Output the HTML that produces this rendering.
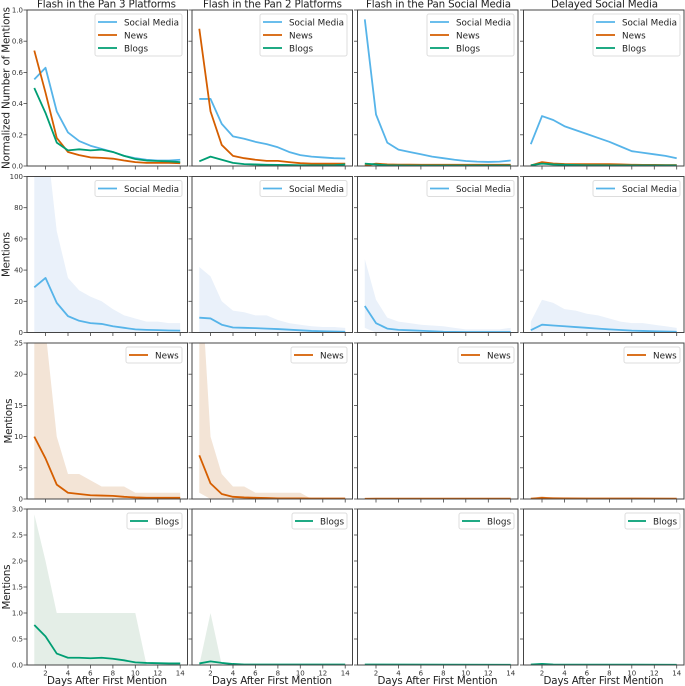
<!DOCTYPE html>
<html><head><meta charset="utf-8"><style>
html,body{margin:0;padding:0;background:#fff;}
svg{display:block;font-family:"DejaVu Sans","Liberation Sans",sans-serif;}
.sm{fill:none;stroke:#56B4E9;stroke-width:1.8;vector-effect:non-scaling-stroke;stroke-linejoin:round}
.nw{fill:none;stroke:#D55E00;stroke-width:1.8;vector-effect:non-scaling-stroke;stroke-linejoin:round}
.bl{fill:none;stroke:#009E73;stroke-width:1.8;vector-effect:non-scaling-stroke;stroke-linejoin:round}
.fs{fill:#eaf1fa;stroke:none}
.fn{fill:#f3e4d6;stroke:none}
.fb{fill:#e4eee7;stroke:none}
.fr{fill:none;stroke:#444;stroke-width:1}
.lg{fill:#fff;fill-opacity:.85;stroke:#ddd;stroke-width:1}
.lt{font-size:8.8px;fill:#222}
.tk{font-size:7px;fill:#333}
.ti{font-size:10.3px;fill:#222}
.ax{font-size:10.3px;fill:#222}
.tm{stroke:#444;stroke-width:.8}
</style></head><body>
<svg width="685" height="686" viewBox="0 0 685 686">
<defs>
<g id="xt" class="tm"><line x1="18.5" y1="156" x2="18.5" y2="159.5"/><line x1="41" y1="156" x2="41" y2="159.5"/><line x1="63.4" y1="156" x2="63.4" y2="159.5"/><line x1="85.9" y1="156" x2="85.9" y2="159.5"/><line x1="108.3" y1="156" x2="108.3" y2="159.5"/><line x1="130.8" y1="156" x2="130.8" y2="159.5"/><line x1="153.2" y1="156" x2="153.2" y2="159.5"/>
<line x1="0" y1="0" x2="-3.5" y2="0"/><line x1="0" y1="31.2" x2="-3.5" y2="31.2"/><line x1="0" y1="62.4" x2="-3.5" y2="62.4"/><line x1="0" y1="93.6" x2="-3.5" y2="93.6"/><line x1="0" y1="124.8" x2="-3.5" y2="124.8"/><line x1="0" y1="156" x2="-3.5" y2="156"/></g>
<g id="xt4" class="tm"><line x1="18.5" y1="156" x2="18.5" y2="159.5"/><line x1="41" y1="156" x2="41" y2="159.5"/><line x1="63.4" y1="156" x2="63.4" y2="159.5"/><line x1="85.9" y1="156" x2="85.9" y2="159.5"/><line x1="108.3" y1="156" x2="108.3" y2="159.5"/><line x1="130.8" y1="156" x2="130.8" y2="159.5"/><line x1="153.2" y1="156" x2="153.2" y2="159.5"/>
<line x1="0" y1="0" x2="-3.5" y2="0"/><line x1="0" y1="26" x2="-3.5" y2="26"/><line x1="0" y1="52" x2="-3.5" y2="52"/><line x1="0" y1="78" x2="-3.5" y2="78"/><line x1="0" y1="104" x2="-3.5" y2="104"/><line x1="0" y1="130" x2="-3.5" y2="130"/><line x1="0" y1="156" x2="-3.5" y2="156"/></g>
</defs>

<text class="ti" x="106.5" y="7.5" text-anchor="middle" textLength="139">Flash in the Pan 3 Platforms</text>
<text class="ti" x="272.5" y="7.5" text-anchor="middle" textLength="139">Flash in the Pan 2 Platforms</text>
<text class="ti" x="438.5" y="7.5" text-anchor="middle" textLength="145">Flash in the Pan Social Media</text>
<text class="ti" x="604.5" y="7.5" text-anchor="middle" textLength="107">Delayed Social Media</text>

<text class="ax" transform="translate(9.5,88) rotate(-90)" text-anchor="middle" textLength="162">Normalized Number of Mentions</text>
<text class="ax" transform="translate(9.5,254.5) rotate(-90)" text-anchor="middle" textLength="45">Mentions</text>
<text class="ax" transform="translate(12,421) rotate(-90)" text-anchor="middle" textLength="45">Mentions</text>
<text class="ax" transform="translate(10,587) rotate(-90)" text-anchor="middle" textLength="45">Mentions</text>

<g class="tk" text-anchor="end">
<text x="23" y="12.5">1.0</text><text x="23" y="43.7">0.8</text><text x="23" y="74.9">0.6</text><text x="23" y="106.1">0.4</text><text x="23" y="137.3">0.2</text><text x="23" y="168.5">0.0</text>
<text x="23" y="179">100</text><text x="23" y="210.2">80</text><text x="23" y="241.4">60</text><text x="23" y="272.6">40</text><text x="23" y="303.8">20</text><text x="23" y="335">0</text>
<text x="23" y="345.5">25</text><text x="23" y="376.7">20</text><text x="23" y="407.9">15</text><text x="23" y="439.1">10</text><text x="23" y="470.3">5</text><text x="23" y="501.5">0</text>
<text x="23" y="511.5">3.0</text><text x="23" y="537.5">2.5</text><text x="23" y="563.5">2.0</text><text x="23" y="589.5">1.5</text><text x="23" y="615.5">1.0</text><text x="23" y="641.5">0.5</text><text x="23" y="667.5">0.0</text>
</g>

<g class="tk" text-anchor="middle">
<text x="45.5" y="675.5">2</text><text x="68" y="675.5">4</text><text x="90.4" y="675.5">6</text><text x="112.9" y="675.5">8</text><text x="135.3" y="675.5">10</text><text x="157.8" y="675.5">12</text><text x="180.2" y="675.5">14</text>
<text x="210.5" y="675.5">2</text><text x="233" y="675.5">4</text><text x="255.4" y="675.5">6</text><text x="277.9" y="675.5">8</text><text x="300.3" y="675.5">10</text><text x="322.8" y="675.5">12</text><text x="345.2" y="675.5">14</text>
<text x="376" y="675.5">2</text><text x="398.5" y="675.5">4</text><text x="420.9" y="675.5">6</text><text x="443.4" y="675.5">8</text><text x="465.8" y="675.5">10</text><text x="488.3" y="675.5">12</text><text x="510.7" y="675.5">14</text>
<text x="542" y="675.5">2</text><text x="564.5" y="675.5">4</text><text x="586.9" y="675.5">6</text><text x="609.4" y="675.5">8</text><text x="631.8" y="675.5">10</text><text x="654.3" y="675.5">12</text><text x="676.7" y="675.5">14</text>
</g>
<g class="ax" text-anchor="middle">
<text x="107" y="684" textLength="120">Days After First Mention</text><text x="272" y="684" textLength="120">Days After First Mention</text><text x="437.5" y="684" textLength="120">Days After First Mention</text><text x="603.5" y="684" textLength="120">Days After First Mention</text>
</g>

<use href="#xt" x="27" y="10"/><use href="#xt" x="192" y="10"/><use href="#xt" x="357.5" y="10"/><use href="#xt" x="523.5" y="10"/>
<use href="#xt" x="27" y="176.5"/><use href="#xt" x="192" y="176.5"/><use href="#xt" x="357.5" y="176.5"/><use href="#xt" x="523.5" y="176.5"/>
<use href="#xt" x="27" y="343"/><use href="#xt" x="192" y="343"/><use href="#xt" x="357.5" y="343"/><use href="#xt" x="523.5" y="343"/>
<use href="#xt4" x="27" y="509"/><use href="#xt4" x="192" y="509"/><use href="#xt4" x="357.5" y="509"/><use href="#xt4" x="523.5" y="509"/>

<svg x="27" y="10" width="160.5" height="156" viewBox="0.35 -1 14.3 1" preserveAspectRatio="none">
<polyline class="sm" points="1,-.555 2,-.63 3,-.35 4,-.215 5,-.16 6,-.13 7,-.11 8,-.09 9,-.065 10,-.05 11,-.04 12,-.035 13,-.035 14,-.04"/>
<polyline class="nw" points="1,-.74 2,-.47 3,-.18 4,-.09 5,-.07 6,-.055 7,-.052 8,-.047 9,-.035 10,-.025 11,-.02 12,-.02 13,-.02 14,-.018"/>
<polyline class="bl" points="1,-.50 2,-.34 3,-.15 4,-.10 5,-.107 6,-.10 7,-.105 8,-.09 9,-.065 10,-.045 11,-.035 12,-.032 13,-.03 14,-.025"/>
</svg>
<svg x="192" y="10" width="160.5" height="156" viewBox="0.35 -1 14.3 1" preserveAspectRatio="none">
<polyline class="sm" points="1,-.43 2,-.43 3,-.27 4,-.19 5,-.175 6,-.155 7,-.14 8,-.12 9,-.09 10,-.07 11,-.06 12,-.055 13,-.05 14,-.048"/>
<polyline class="nw" points="1,-.88 2,-.35 3,-.135 4,-.065 5,-.05 6,-.04 7,-.033 8,-.033 9,-.025 10,-.018 11,-.015 12,-.015 13,-.015 14,-.015"/>
<polyline class="bl" points="1,-.03 2,-.06 3,-.04 4,-.02 5,-.012 6,-.01 7,-.008 8,-.007 9,-.006 10,-.005 11,-.005 12,-.005 13,-.005 14,-.01"/>
</svg>
<svg x="357.5" y="10" width="160.5" height="156" viewBox="0.35 -1 14.3 1" preserveAspectRatio="none">
<polyline class="sm" points="1,-.94 2,-.33 3,-.15 4,-.105 5,-.09 6,-.075 7,-.06 8,-.05 9,-.04 10,-.032 11,-.028 12,-.026 13,-.028 14,-.035"/>
<polyline class="nw" points="1,-.002 2,-.015 3,-.01 4,-.009 5,-.009 6,-.008 7,-.008 8,-.008 9,-.008 10,-.008 11,-.008 12,-.008 13,-.008 14,-.008"/>
<polyline class="bl" points="1,-.015 2,-.01 3,-.005 4,-.004 5,-.003 6,-.003 7,-.003 8,-.003 9,-.003 10,-.003 11,-.003 12,-.003 13,-.003 14,-.003"/>
</svg>
<svg x="523.5" y="10" width="160.5" height="156" viewBox="0.35 -1 14.3 1" preserveAspectRatio="none">
<polyline class="sm" points="1,-.14 2,-.32 3,-.295 4,-.255 5,-.23 6,-.205 7,-.18 8,-.155 9,-.125 10,-.095 11,-.085 12,-.075 13,-.065 14,-.05"/>
<polyline class="nw" points="1,-.003 2,-.025 3,-.016 4,-.013 5,-.012 6,-.012 7,-.012 8,-.012 9,-.01 10,-.008 11,-.007 12,-.007 13,-.006 14,-.006"/>
<polyline class="bl" points="1,-.005 2,-.015 3,-.01 4,-.008 5,-.006 6,-.005 7,-.005 8,-.004 9,-.004 10,-.004 11,-.004 12,-.004 13,-.004 14,-.004"/>
</svg>

<svg x="27" y="176.5" width="160.5" height="156" viewBox="0.35 -100 14.3 100" preserveAspectRatio="none">
<polygon class="fs" points="1,-140 2,-130 3,-65 4,-35 5,-27 6,-23 7,-20 8,-15 9,-11 10,-9 11,-7 12,-7 13,-6 14,-6 14,0 1,0"/>
<polyline class="sm" points="1,-29 2,-35 3,-19 4,-10.5 5,-7.5 6,-6 7,-5.5 8,-4 9,-3 10,-2 11,-1.7 12,-1.5 13,-1.3 14,-1.2"/>
</svg>
<svg x="192" y="176.5" width="160.5" height="156" viewBox="0.35 -100 14.3 100" preserveAspectRatio="none">
<polygon class="fs" points="1,-42 2,-36 3,-20 4,-14 5,-13 6,-11 7,-11 8,-8 9,-6 10,-5 11,-4 12,-3.5 13,-3.5 14,-3 14,0 1,0"/>
<polyline class="sm" points="1,-9.5 2,-9 3,-5 4,-3.2 5,-3 6,-2.8 7,-2.5 8,-2.2 9,-1.8 10,-1.4 11,-1 12,-.8 13,-.6 14,-.5"/>
</svg>
<svg x="357.5" y="176.5" width="160.5" height="156" viewBox="0.35 -100 14.3 100" preserveAspectRatio="none">
<polygon class="fs" points="1,-47 2,-21 3,-9.5 4,-7 5,-6 6,-5 7,-4.5 8,-4 9,-3 10,-2 11,-2 12,-2 13,-2 14,-3 14,0 2,0 1,-3"/>
<polyline class="sm" points="1,-17 2,-6 3,-2.5 4,-1.7 5,-1.4 6,-1.1 7,-.8 8,-.5 9,-.4 10,-.3 11,-.3 12,-.3 13,-.3 14,-.3"/>
</svg>
<svg x="523.5" y="176.5" width="160.5" height="156" viewBox="0.35 -100 14.3 100" preserveAspectRatio="none">
<polygon class="fs" points="1,-7 2,-21 3,-19 4,-15 5,-14 6,-12 7,-11 8,-9 9,-7 10,-6 11,-6 12,-5 13,-4 14,-3 14,0 1,0"/>
<polyline class="sm" points="1,-1.5 2,-5 3,-4.5 4,-4 5,-3.5 6,-3 7,-2.5 8,-2 9,-1.6 10,-1.2 11,-1 12,-.8 13,-.6 14,-.5"/>
</svg>

<svg x="27" y="343" width="160.5" height="156" viewBox="0.35 -25 14.3 25" preserveAspectRatio="none">
<polygon class="fn" points="1,-45 2,-27 3,-10 4,-4 5,-4 6,-3 7,-2 8,-2 9,-2 10,-1 11,-1 12,-1 13,-1 14,-1 14,0 1,0"/>
<polyline class="nw" points="1,-10 2,-6.5 3,-2.3 4,-1 5,-.8 6,-.6 7,-.55 8,-.5 9,-.35 10,-.25 11,-.2 12,-.2 13,-.2 14,-.2"/>
</svg>
<svg x="192" y="343" width="160.5" height="156" viewBox="0.35 -25 14.3 25" preserveAspectRatio="none">
<polygon class="fn" points="1,-40 2,-10 3,-4 4,-2 5,-2 6,-1 7,-1 8,-1 9,-1 10,-1 11,0 14,0 2,0 1,-1"/>
<polyline class="nw" points="1,-7 2,-2.5 3,-.8 4,-.35 5,-.25 6,-.2 7,-.15 8,-.1 9,-.1 10,-.1 11,-.08 12,-.08 13,-.08 14,-.08"/>
</svg>
<svg x="357.5" y="343" width="160.5" height="156" viewBox="0.35 -25 14.3 25" preserveAspectRatio="none">
<polyline class="nw" points="1,-.03 2,-.05 14,-.05"/>
</svg>
<svg x="523.5" y="343" width="160.5" height="156" viewBox="0.35 -25 14.3 25" preserveAspectRatio="none">
<polygon class="fn" points="1,0 2,-.5 3,0"/>
<polyline class="nw" points="1,-.05 2,-.17 3,-.12 4,-.1 6,-.08 14,-.06"/>
</svg>

<svg x="27" y="509" width="160.5" height="156" viewBox="0.35 -3 14.3 3" preserveAspectRatio="none">
<polygon class="fb" points="1,-2.9 2,-2 3,-1 4,-1 5,-1 6,-1 7,-1 8,-1 9,-1 10,-1 11,0 14,0 1,0"/>
<polyline class="bl" points="1,-.77 2,-.55 3,-.22 4,-.14 5,-.14 6,-.13 7,-.14 8,-.12 9,-.09 10,-.05 11,-.04 12,-.035 13,-.03 14,-.03"/>
</svg>
<svg x="192" y="509" width="160.5" height="156" viewBox="0.35 -3 14.3 3" preserveAspectRatio="none">
<polygon class="fb" points="1,0 2,-1 3,0"/>
<polyline class="bl" points="1,-.03 2,-.07 3,-.04 4,-.02 5,-.01 6,-.01 14,-.01"/>
</svg>
<svg x="357.5" y="509" width="160.5" height="156" viewBox="0.35 -3 14.3 3" preserveAspectRatio="none">
<polyline class="bl" points="1,-.01 2,-.01 14,-.005"/>
</svg>
<svg x="523.5" y="509" width="160.5" height="156" viewBox="0.35 -3 14.3 3" preserveAspectRatio="none">
<polyline class="bl" points="1,-.01 2,-.02 3,-.01 14,-.005"/>
</svg>

<g class="fr">
<rect x="27" y="10" width="160.5" height="156"/><rect x="192" y="10" width="160.5" height="156"/><rect x="357.5" y="10" width="160.5" height="156"/><rect x="523.5" y="10" width="160.5" height="156"/>
<rect x="27" y="176.5" width="160.5" height="156"/><rect x="192" y="176.5" width="160.5" height="156"/><rect x="357.5" y="176.5" width="160.5" height="156"/><rect x="523.5" y="176.5" width="160.5" height="156"/>
<rect x="27" y="343" width="160.5" height="156"/><rect x="192" y="343" width="160.5" height="156"/><rect x="357.5" y="343" width="160.5" height="156"/><rect x="523.5" y="343" width="160.5" height="156"/>
<rect x="27" y="509" width="160.5" height="156"/><rect x="192" y="509" width="160.5" height="156"/><rect x="357.5" y="509" width="160.5" height="156"/><rect x="523.5" y="509" width="160.5" height="156"/>
</g>

<g>
<rect class="lg" x="95" y="14" width="87" height="42" rx="2"/>
<line x1="98" y1="22" x2="117" y2="22" stroke="#56B4E9" stroke-width="1.8"/><text class="lt" x="124" y="25.3" textLength="55">Social Media</text>
<line x1="98" y1="35" x2="117" y2="35" stroke="#D55E00" stroke-width="1.8"/><text class="lt" x="124" y="38.3">News</text>
<line x1="98" y1="48" x2="117" y2="48" stroke="#009E73" stroke-width="1.8"/><text class="lt" x="124" y="51.3">Blogs</text>
</g>
<g>
<rect class="lg" x="260" y="14" width="87" height="42" rx="2"/>
<line x1="263" y1="22" x2="282" y2="22" stroke="#56B4E9" stroke-width="1.8"/><text class="lt" x="289" y="25.3" textLength="55">Social Media</text>
<line x1="263" y1="35" x2="282" y2="35" stroke="#D55E00" stroke-width="1.8"/><text class="lt" x="289" y="38.3">News</text>
<line x1="263" y1="48" x2="282" y2="48" stroke="#009E73" stroke-width="1.8"/><text class="lt" x="289" y="51.3">Blogs</text>
</g>
<g>
<rect class="lg" x="427" y="14" width="87" height="42" rx="2"/>
<line x1="430" y1="22" x2="449" y2="22" stroke="#56B4E9" stroke-width="1.8"/><text class="lt" x="456" y="25.3" textLength="55">Social Media</text>
<line x1="430" y1="35" x2="449" y2="35" stroke="#D55E00" stroke-width="1.8"/><text class="lt" x="456" y="38.3">News</text>
<line x1="430" y1="48" x2="449" y2="48" stroke="#009E73" stroke-width="1.8"/><text class="lt" x="456" y="51.3">Blogs</text>
</g>
<g>
<rect class="lg" x="593" y="14" width="87" height="42" rx="2"/>
<line x1="596" y1="22" x2="615" y2="22" stroke="#56B4E9" stroke-width="1.8"/><text class="lt" x="622" y="25.3" textLength="55">Social Media</text>
<line x1="596" y1="35" x2="615" y2="35" stroke="#D55E00" stroke-width="1.8"/><text class="lt" x="622" y="38.3">News</text>
<line x1="596" y1="48" x2="615" y2="48" stroke="#009E73" stroke-width="1.8"/><text class="lt" x="622" y="51.3">Blogs</text>
</g>

<g>
<rect class="lg" x="95" y="180.5" width="87" height="16" rx="2"/><line x1="98" y1="188.5" x2="117" y2="188.5" stroke="#56B4E9" stroke-width="1.8"/><text class="lt" x="124" y="191.8" textLength="55">Social Media</text>
<rect class="lg" x="260" y="180.5" width="87" height="16" rx="2"/><line x1="263" y1="188.5" x2="282" y2="188.5" stroke="#56B4E9" stroke-width="1.8"/><text class="lt" x="289" y="191.8" textLength="55">Social Media</text>
<rect class="lg" x="427" y="180.5" width="87" height="16" rx="2"/><line x1="430" y1="188.5" x2="449" y2="188.5" stroke="#56B4E9" stroke-width="1.8"/><text class="lt" x="456" y="191.8" textLength="55">Social Media</text>
<rect class="lg" x="593" y="180.5" width="87" height="16" rx="2"/><line x1="596" y1="188.5" x2="615" y2="188.5" stroke="#56B4E9" stroke-width="1.8"/><text class="lt" x="622" y="191.8" textLength="55">Social Media</text>
</g>

<g>
<rect class="lg" x="126" y="347" width="56" height="16" rx="2"/><line x1="129" y1="355" x2="148" y2="355" stroke="#D55E00" stroke-width="1.8"/><text class="lt" x="155" y="358.3">News</text>
<rect class="lg" x="291" y="347" width="56" height="16" rx="2"/><line x1="294" y1="355" x2="313" y2="355" stroke="#D55E00" stroke-width="1.8"/><text class="lt" x="320" y="358.3">News</text>
<rect class="lg" x="458" y="347" width="56" height="16" rx="2"/><line x1="461" y1="355" x2="480" y2="355" stroke="#D55E00" stroke-width="1.8"/><text class="lt" x="487" y="358.3">News</text>
<rect class="lg" x="624" y="347" width="56" height="16" rx="2"/><line x1="627" y1="355" x2="646" y2="355" stroke="#D55E00" stroke-width="1.8"/><text class="lt" x="653" y="358.3">News</text>
</g>

<g>
<rect class="lg" x="127" y="513" width="55" height="16" rx="2"/><line x1="130" y1="521" x2="148" y2="521" stroke="#009E73" stroke-width="1.8"/><text class="lt" x="155" y="524.3">Blogs</text>
<rect class="lg" x="292" y="513" width="55" height="16" rx="2"/><line x1="295" y1="521" x2="313" y2="521" stroke="#009E73" stroke-width="1.8"/><text class="lt" x="320" y="524.3">Blogs</text>
<rect class="lg" x="459" y="513" width="55" height="16" rx="2"/><line x1="462" y1="521" x2="480" y2="521" stroke="#009E73" stroke-width="1.8"/><text class="lt" x="487" y="524.3">Blogs</text>
<rect class="lg" x="625" y="513" width="55" height="16" rx="2"/><line x1="628" y1="521" x2="646" y2="521" stroke="#009E73" stroke-width="1.8"/><text class="lt" x="653" y="524.3">Blogs</text>
</g>
</svg>
</body></html>
